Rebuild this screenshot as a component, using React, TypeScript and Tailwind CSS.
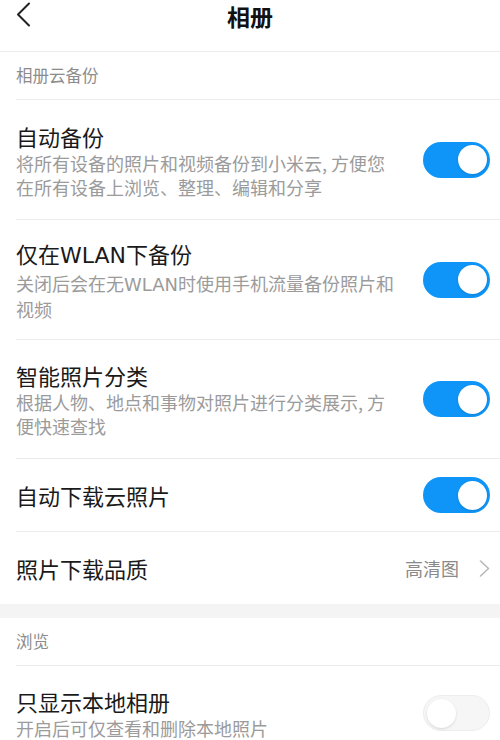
import React from 'react';

const font = { fontFamily: '"Noto Sans CJK SC", "Noto Sans", sans-serif' };
const latin = { fontFamily: '"DejaVu Sans", "Noto Sans CJK SC", sans-serif' };

function Toggle({ on = true }: { on?: boolean }) {
    return (
        <div
            className={
                on
                    ? 'w-[67px] h-[36px] rounded-full bg-[#0f95f7] flex items-center justify-end pr-[3px] shrink-0'
                    : 'w-[67px] h-[36px] rounded-full bg-[#f6f6f6] border border-[#ededed] flex items-center justify-start pl-[3px] shrink-0'
            }
        >
            <div className="w-[29px] h-[29px] rounded-full bg-white shadow-sm" />
        </div>
    );
}

function Divider() {
    return <div className="ml-4 h-px bg-[#ececec]" />;
}

function SettingRow({ title, lines, h }: { title: React.ReactNode; lines: React.ReactNode[]; h: string }) {
    return (
        <div className={`flex items-center pl-4 pr-[10px] ${h}`}>
            <div className="flex-1">
                <div className="text-[22px] leading-[30px] text-[#1a1a1a]">{title}</div>
                {lines.map((l, i) => (
                    <div key={i} className="text-[18px] leading-[24px] text-[#9b9b9b] whitespace-nowrap">
                        {l}
                    </div>
                ))}
            </div>
            <Toggle />
        </div>
    );
}

function SectionLabel({ text }: { text: string }) {
    return (
        <div className="h-[47px] flex items-center pl-4 text-[16.5px] text-[#8c8c8c]">{text}</div>
    );
}

export default function App() {
    return (
        <div className="w-[500px] h-[740px] bg-white overflow-hidden" style={font}>
            {/* header */}
            <div className="h-[52px] relative border-b border-[#ececec]">
                <div className="absolute left-4 top-[2px]">
                    <svg width="15" height="25" viewBox="0 0 15 25" fill="none">
                        <path d="M13 1.5L2 12.5L13 23.5" stroke="#222" strokeWidth="2" strokeLinecap="round" strokeLinejoin="round" />
                    </svg>
                </div>
                <div className="text-center text-[23px] leading-[32px] font-semibold text-[#111]">相册</div>
            </div>

            <SectionLabel text="相册云备份" />
            <Divider />

            <SettingRow
                h="h-[119px]"
                title="自动备份"
                lines={['将所有设备的照片和视频备份到小米云, 方便您', '在所有设备上浏览、整理、编辑和分享']}
            />
            <Divider />
            <SettingRow
                h="h-[119px]"
                title={
                    <>
                        仅在<span style={latin}>WLAN</span>下备份
                    </>
                }
                lines={[
                    <>
                        关闭后会在无<span style={latin}>WLAN</span>时使用手机流量备份照片和
                    </>,
                    '视频',
                ]}
            />
            <Divider />
            <SettingRow
                h="h-[118px]"
                title="智能照片分类"
                lines={['根据人物、地点和事物对照片进行分类展示, 方', '便快速查找']}
            />
            <Divider />

            <div className="h-[72px] flex items-center pl-4 pr-[10px]">
                <div className="flex-1 text-[22px] text-[#1a1a1a]">自动下载云照片</div>
                <Toggle />
            </div>
            <Divider />

            <div className="h-[72px] flex items-center pl-4 pr-[10px]">
                <div className="flex-1 text-[22px] text-[#1a1a1a]">照片下载品质</div>
                <span className="text-[18px] text-[#8a8a8a] mr-[20px]">高清图</span>
                <svg width="11" height="17" viewBox="0 0 11 17" fill="none">
                    <path d="M1.5 1L9.5 8.5L1.5 16" stroke="#b8b8b8" strokeWidth="1.6" strokeLinecap="round" strokeLinejoin="round" />
                </svg>
            </div>

            <div className="h-[14px] bg-[#f4f4f4]" />

            <SectionLabel text="浏览" />
            <Divider />

            <div className="flex items-center pl-4 pr-[10px] pt-[20px]">
                <div className="flex-1">
                    <div className="text-[22px] leading-[30px] text-[#1a1a1a]">只显示本地相册</div>
                    <div className="text-[18px] leading-[24px] text-[#9b9b9b]">开启后可仅查看和删除本地照片</div>
                </div>
                <Toggle on={false} />
            </div>
        </div>
    );
}
